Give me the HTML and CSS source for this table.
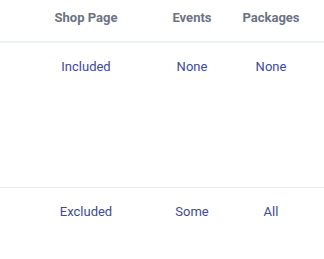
FILE: index.html
```html
<!DOCTYPE html>
<html>
<head>
<meta charset="utf-8">
<link rel="stylesheet" href="styles.css">
</head>
<body>
<div class="table">
  <div class="row head">
    <div class="cell">Shop Page</div>
    <div class="cell">Events</div>
    <div class="cell">Packages</div>
  </div>
  <div class="row body tall">
    <div class="cell">Included</div>
    <div class="cell">None</div>
    <div class="cell">None</div>
  </div>
  <div class="row body">
    <div class="cell">Excluded</div>
    <div class="cell">Some</div>
    <div class="cell">All</div>
  </div>
</div>
</body>
</html>
```
FILE: styles.css
```css
html, body {
  margin: 0;
  padding: 0;
  background: #ffffff;
  font-family: Roboto, "Noto Sans", sans-serif;
}
.table {
  width: 324px;
}
.row {
  display: grid;
  grid-template-columns: 14px 144px 68px 90px;
}
.row::before {
  content: "";
}
.cell {
  text-align: center;
  line-height: 20px;
  white-space: nowrap;
}
.head {
  height: 41px;
  border-bottom: 2px solid #eef1f6;
}
.head .cell {
  padding-top: 8px;
  font-size: 13px;
  font-weight: 700;
  color: #6b7383;
}
.body .cell {
  padding-top: 14px;
  font-size: 13px;
  color: #3e4a96;
}
.tall {
  height: 144px;
  border-bottom: 1px solid #ececec;
}
.body:last-child {
  height: 70px;
}
```
